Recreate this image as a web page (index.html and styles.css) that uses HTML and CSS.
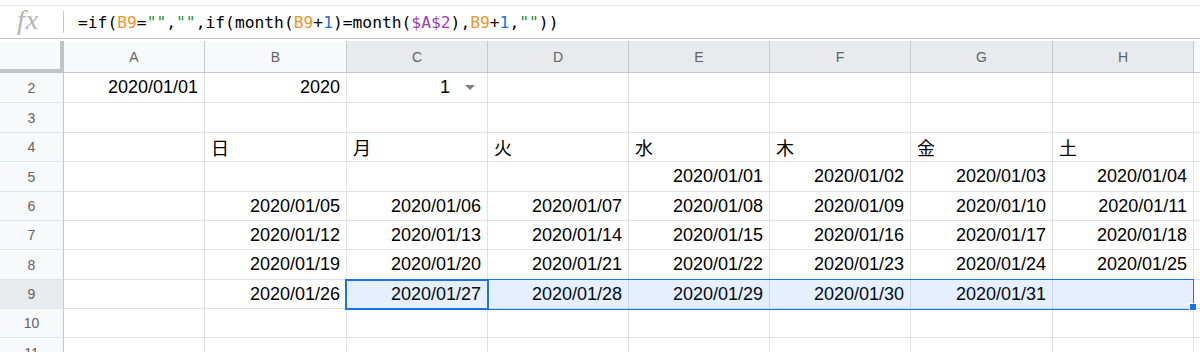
FILE: index.html
```html
<!DOCTYPE html>
<html lang="ja">
<head>
  <meta charset="UTF-8" />
  <title>カレンダー - スプレッドシート</title>
  <link rel="stylesheet" href="styles.css">
</head>
<body>
  <div class="topline"></div>
  <div class="formula-bar">
    <span class="fx">fx</span>
    <span class="sep"></span>
    <span class="formula">=if(<span class="ref-o">B9</span>=<span class="str">""</span>,<span class="str">""</span>,if(month(<span class="ref-o">B9</span>+<span class="num">1</span>)=month(<span class="ref-p">$A$2</span>),<span class="ref-o">B9</span>+<span class="num">1</span>,<span class="str">""</span>))</span>
  </div>

  <div class="sheet">
    <!-- column headers -->
    <div class="corner"></div>
    <div class="ch">A</div>
    <div class="ch">B</div>
    <div class="ch on">C</div>
    <div class="ch on">D</div>
    <div class="ch on">E</div>
    <div class="ch on">F</div>
    <div class="ch on">G</div>
    <div class="ch on">H</div>
    <div class="ch tail"></div>

    <!-- row 2 -->
    <div class="rh">2</div>
    <div class="c r">2020/01/01</div>
    <div class="c r">2020</div>
    <div class="c r"><span>1</span><span class="dd"></span></div>
    <div class="c"></div>
    <div class="c"></div>
    <div class="c"></div>
    <div class="c"></div>
    <div class="c"></div>
    <div class="c tail"></div>

    <!-- row 3 -->
    <div class="rh">3</div>
    <div class="c"></div>
    <div class="c"></div>
    <div class="c"></div>
    <div class="c"></div>
    <div class="c"></div>
    <div class="c"></div>
    <div class="c"></div>
    <div class="c"></div>
    <div class="c tail"></div>

    <!-- row 4 -->
    <div class="rh">4</div>
    <div class="c"></div>
    <div class="c l">日</div>
    <div class="c l">月</div>
    <div class="c l">火</div>
    <div class="c l">水</div>
    <div class="c l">木</div>
    <div class="c l">金</div>
    <div class="c l">土</div>
    <div class="c tail"></div>

    <!-- row 5 -->
    <div class="rh">5</div>
    <div class="c"></div>
    <div class="c"></div>
    <div class="c"></div>
    <div class="c"></div>
    <div class="c r">2020/01/01</div>
    <div class="c r">2020/01/02</div>
    <div class="c r">2020/01/03</div>
    <div class="c r">2020/01/04</div>
    <div class="c tail"></div>

    <!-- row 6 -->
    <div class="rh">6</div>
    <div class="c"></div>
    <div class="c r">2020/01/05</div>
    <div class="c r">2020/01/06</div>
    <div class="c r">2020/01/07</div>
    <div class="c r">2020/01/08</div>
    <div class="c r">2020/01/09</div>
    <div class="c r">2020/01/10</div>
    <div class="c r">2020/01/11</div>
    <div class="c tail"></div>

    <!-- row 7 -->
    <div class="rh">7</div>
    <div class="c"></div>
    <div class="c r">2020/01/12</div>
    <div class="c r">2020/01/13</div>
    <div class="c r">2020/01/14</div>
    <div class="c r">2020/01/15</div>
    <div class="c r">2020/01/16</div>
    <div class="c r">2020/01/17</div>
    <div class="c r">2020/01/18</div>
    <div class="c tail"></div>

    <!-- row 8 -->
    <div class="rh">8</div>
    <div class="c"></div>
    <div class="c r">2020/01/19</div>
    <div class="c r">2020/01/20</div>
    <div class="c r">2020/01/21</div>
    <div class="c r">2020/01/22</div>
    <div class="c r">2020/01/23</div>
    <div class="c r">2020/01/24</div>
    <div class="c r">2020/01/25</div>
    <div class="c tail"></div>

    <!-- row 9 -->
    <div class="rh on">9</div>
    <div class="c"></div>
    <div class="c r">2020/01/26</div>
    <div class="c r">2020/01/27</div>
    <div class="c r">2020/01/28</div>
    <div class="c r">2020/01/29</div>
    <div class="c r">2020/01/30</div>
    <div class="c r">2020/01/31</div>
    <div class="c"></div>
    <div class="c tail"></div>

    <!-- row 10 -->
    <div class="rh">10</div>
    <div class="c"></div>
    <div class="c"></div>
    <div class="c"></div>
    <div class="c"></div>
    <div class="c"></div>
    <div class="c"></div>
    <div class="c"></div>
    <div class="c"></div>
    <div class="c tail"></div>

    <!-- row 11 (cut off by the window) -->
    <div class="rh">11</div>
    <div class="c"></div>
    <div class="c"></div>
    <div class="c"></div>
    <div class="c"></div>
    <div class="c"></div>
    <div class="c"></div>
    <div class="c"></div>
    <div class="c"></div>
    <div class="c tail"></div>

    <!-- selection C9:H9 -->
    <div class="range"></div>
    <div class="active"></div>
    <div class="handle"></div>
  </div>
</body>
</html>
```

FILE: styles.css
```css
html, body {
  margin: 0;
  padding: 0;
  height: 100%;
  background: #fff;
  font-family: "Liberation Sans", Arial, sans-serif;
  overflow: hidden;
}
.topline {
  height: 5px;
}
.formula-bar {
  display: flex;
  align-items: center;
  height: 32px;
  border-top: 1px solid #e3e3e3;
  border-bottom: 1px solid #c7c7c7;
  margin-bottom: 2px;
}
.fx {
  width: 45px;
  padding-left: 17px;
  box-sizing: border-box;
  font-family: "Liberation Serif", serif;
  font-style: italic;
  font-size: 28px;
  letter-spacing: 1px;
  color: #b4b4b4;
  line-height: 1;
  margin-top: -4px;
}
.sep {
  width: 1px;
  height: 22px;
  background: #c9c9c9;
  margin-left: 18px;
}
.formula {
  margin-left: 14px;
  font-family: "DejaVu Sans Mono", "Liberation Mono", monospace;
  font-size: 16.3px;
  color: #000;
  white-space: pre;
}
.ref-o { color: #f5942a; }
.ref-p { color: #9a3fb6; }
.num { color: #1a73e8; }
.str { color: #1e8e3e; }

.sheet {
  position: relative;
  display: grid;
  grid-template-columns: 64px 141px 142px 141px 141px 141px 141px 142px 141px 1fr;
  grid-template-rows: 32px 30px 30px 29px 30px 29px 29px 30px 29px 29px 30px;
}
.corner {
  background: #f8f9fa;
  border-right: 4px solid #c2c2c2;
  border-bottom: 4px solid #c2c2c2;
  box-sizing: border-box;
}
.ch {
  display: flex;
  align-items: center;
  justify-content: center;
  background: #f8f9fa;
  border-right: 1px solid #c7c7c7;
  border-bottom: 1px solid #c7c7c7;
  box-sizing: border-box;
  font-size: 14px;
  color: #5f6368;
}
.ch.on {
  background: #e8eaed;
}
.ch.tail {
  border-right: none;
}
.rh {
  display: flex;
  align-items: center;
  justify-content: center;
  background: #f8f9fa;
  border-right: 1px solid #c7c7c7;
  border-bottom: 1px solid #e2e2e2;
  box-sizing: border-box;
  font-size: 14px;
  color: #5f6368;
}
.rh.on {
  background: #e8eaed;
}
.c {
  display: flex;
  align-items: center;
  border-right: 1px solid #e2e2e2;
  border-bottom: 1px solid #e2e2e2;
  box-sizing: border-box;
  font-size: 18px;
  color: #000;
  white-space: nowrap;
  overflow: hidden;
}
.c.r {
  justify-content: flex-end;
  padding-right: 6px;
}
.c.l {
  padding-left: 6px;
  font-family: "Liberation Sans", "Noto Sans CJK JP", sans-serif;
}
.c.tail {
  border-right: none;
}
.dd {
  width: 0;
  height: 0;
  border-left: 5px solid transparent;
  border-right: 5px solid transparent;
  border-top: 5px solid #808080;
  margin-left: 15px;
  margin-right: 6px;
}

.range {
  position: absolute;
  left: 346px;
  top: 238px;
  width: 848px;
  height: 31px;
  box-sizing: border-box;
  border: 1px solid #1a73e8;
  background: rgba(14, 101, 235, 0.1);
}
.active {
  position: absolute;
  left: 345px;
  top: 238px;
  width: 144px;
  height: 31px;
  box-sizing: border-box;
  border: 2px solid #1a73e8;
}
.handle {
  position: absolute;
  left: 1189px;
  top: 262px;
  width: 6px;
  height: 6px;
  background: #1a73e8;
  border: 1px solid #fff;
}
```
